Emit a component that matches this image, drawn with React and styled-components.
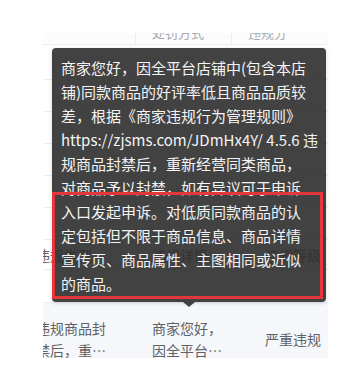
import React, { useLayoutEffect, useRef } from "react";
import styled, { createGlobalStyle } from "styled-components";

const GlobalStyle = createGlobalStyle`
  html, body {
    margin: 0;
    padding: 0;
    background: #fff;
  }
  body {
    font-family: "Noto Sans CJK SC", "Noto Sans", sans-serif;
  }
`;

const Page = styled.div`
  position: relative;
  width: 364px;
  height: 374px;
  padding: 33px 0 0 43px;
  box-sizing: border-box;
`;

const Viewport = styled.div`
  width: 285px;
  height: 325px;
  overflow: hidden;
`;

const Table = styled.div`
  width: 334px;
  display: flex;
  flex-direction: column;
`;

const Row = styled.div`
  display: grid;
  grid-template-columns: 116px 96px 122px;
  height: ${(p) => p.$h}px;
  flex-shrink: 0;
  background: ${(p) => (p.$hover ? "#f5f7fa" : "#fff")};
  border-bottom: 1px solid #ebeef5;
  box-sizing: border-box;
`;

const HeadCell = styled.div`
  display: flex;
  align-items: flex-end;
  overflow: hidden;
  padding: 0 0 0 16px;
  background: #fcfcfc;
  border-right: ${(p) => (p.$last ? "none" : "1px solid #ebeef5")};
  font-size: 13px;
  line-height: 22px;
  color: #a6a9ad;
  white-space: nowrap;
`;

const Cell = styled.div`
  display: flex;
  align-items: center;
  justify-content: ${(p) => (p.$center ? "center" : "flex-start")};
  padding: ${(p) => (p.$center ? "0" : `0 ${p.$right ?? 24}px 0 16px`)};
  font-size: 14px;
  line-height: 22px;
  color: #606266;
  overflow: hidden;
`;

const Clamp = styled.span`
  display: -webkit-box;
  -webkit-line-clamp: 2;
  -webkit-box-orient: vertical;
  overflow: hidden;
  word-break: break-all;
`;

const Tooltip = styled.div`
  position: absolute;
  left: 52px;
  top: 48px;
  width: 274px;
  height: 254px;
  box-sizing: border-box;
  padding: 8px 9px 6px;
  background: rgba(46, 46, 46, 0.9);
  border-radius: 4px;
  color: #f4f4f4;
  font-size: 15px;
  line-height: 24px;
  box-shadow: 0 1px 4px rgba(0, 0, 0, 0.15);
`;

const Line = styled.div`
  white-space: pre;
`;

const Arrow = styled.span`
  position: absolute;
  left: 131px;
  top: 100%;
  width: 0;
  height: 0;
  border-left: 6px solid transparent;
  border-right: 6px solid transparent;
  border-top: 5px solid rgba(46, 46, 46, 0.9);
`;

const Highlight = styled.div`
  position: absolute;
  left: 0;
  top: 144px;
  width: 271px;
  height: 107px;
  box-sizing: border-box;
  border: 3px solid #e5363c;
  pointer-events: none;
`;

const tipLines = [
  "商家您好，因全平台店铺中(包含本店",
  "铺)同款商品的好评率低且商品品质较",
  "差，根据《商家违规行为管理规则》",
  "https://zjsms.com/JDmHx4Y/ 4.5.6 违",
  "规商品封禁后，重新经营同类商品，",
  "对商品予以封禁，如有异议可于申诉",
  "入口发起申诉。对低质同款商品的认",
  "定包括但不限于商品信息、商品详情",
  "宣传页、商品属性、主图相同或近似",
  "的商品。",
];

const plainRows = [35, 32, 32, 32, 32, 32];

export default function App() {
  const viewRef = useRef(null);

  useLayoutEffect(() => {
    if (viewRef.current) viewRef.current.scrollLeft = 23;
  }, []);

  return (
    <>
      <GlobalStyle />
      <Page>
        <Viewport ref={viewRef}>
          <Table>
            <Row $h={12}>
              <HeadCell />
              <HeadCell>处罚方式</HeadCell>
              <HeadCell $last>违规分</HeadCell>
            </Row>
            {plainRows.map((h, i) => (
              <Row key={i} $h={h}>
                <Cell />
                <Cell />
                <Cell $center />
              </Row>
            ))}
            <Row $h={30}>
              <Cell>违规类型</Cell>
              <Cell>违规详情</Cell>
              <Cell $center>违规等级</Cell>
            </Row>
            <Row $h={33}>
              <Cell />
              <Cell />
              <Cell $center />
            </Row>
            <Row $h={72} $hover>
              <Cell>
                <Clamp>违规商品封禁后，重新经营同类商品，对商品予以封禁</Clamp>
              </Cell>
              <Cell $right={8}>
                <Clamp>商家您好，因全平台店铺中(包含本店铺)同款商品的好评率低</Clamp>
              </Cell>
              <Cell $center>严重违规</Cell>
            </Row>
          </Table>
        </Viewport>
        <Tooltip>
          {tipLines.map((t, i) => (
            <Line key={i}>{t}</Line>
          ))}
          <Highlight />
          <Arrow />
        </Tooltip>
      </Page>
    </>
  );
}
